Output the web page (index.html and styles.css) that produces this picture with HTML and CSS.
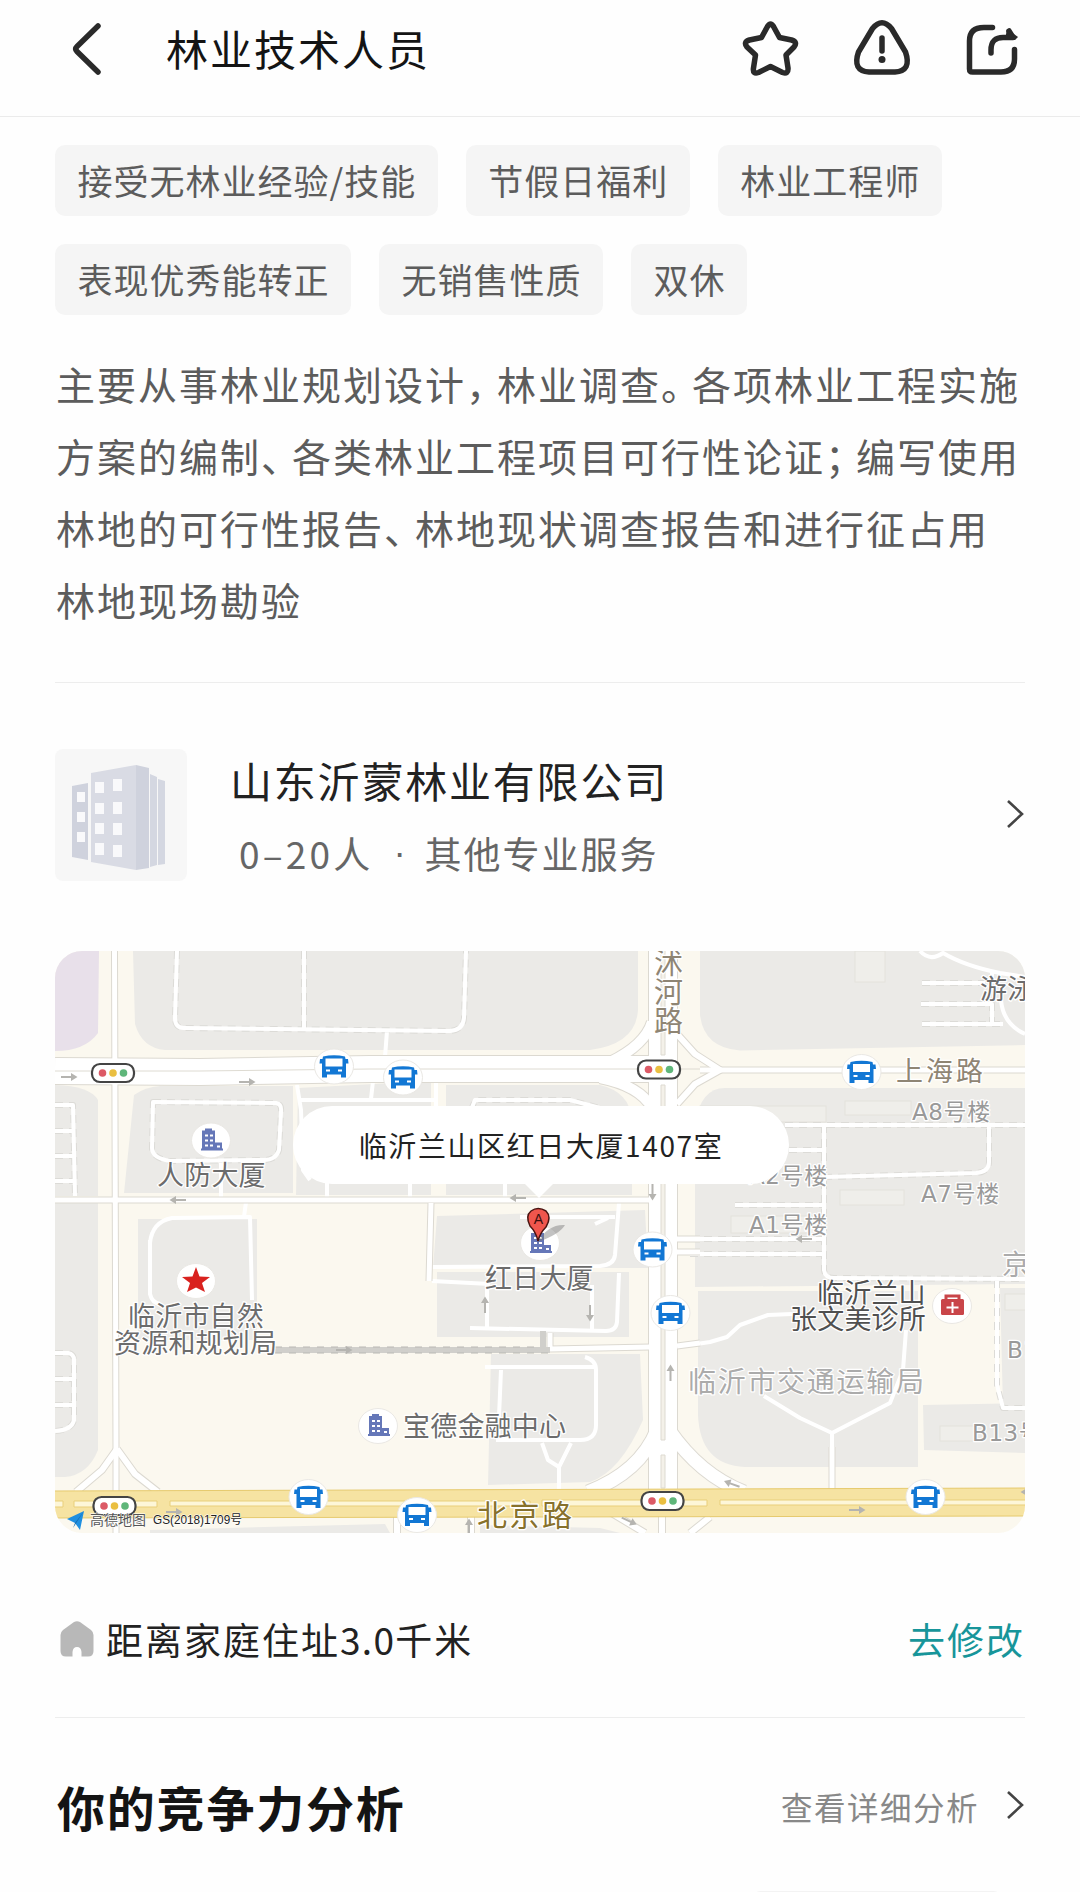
FILE: index.html
```html
<!doctype html>
<html lang="zh-CN">
  <head>
    <meta charset="utf-8" />
    <title>林业技术人员</title>
    <link rel="stylesheet" href="styles.css" />
  </head>

  <body>
    <header class="topbar">
      <svg class="back" viewBox="0 0 34 58">
        <path d="M28 6 L7 26.500 Q4.500 29 7 31.500 L28 52" />
      </svg>
      <h1>林业技术人员</h1>
      <div class="actions">
        <svg viewBox="0 0 60 60">
          <path d="M26.500 8.500 Q29.500 3.500 32.500 8.500 L38.500 19.500 L50.500 22 Q57 24 53 29 L45 37 L47 50 Q47.500 56.500 41.500 54.500 L29.500 48.500 L17.500 54.500 Q11.500 56.500 12.500 50 L14.500 37 L6 29 Q2 24 8.500 22 L20.500 19.500 Z" />
        </svg>
        <svg viewBox="0 0 60 60">
          <path d="M20.500 10.500 Q30 -1 39.500 10.500 L53.500 34 Q60 53 43 54 L17 54 Q0 53 6.500 34 Z" />
          <path d="M30 20 V33" />
          <circle class="dot" cx="30" cy="41.500" r="3.500" />
        </svg>
        <svg viewBox="0 0 60 60">
          <path d="M29.500 9.500 H21 Q6.500 9.500 6.500 23 V51 Q6.500 54 9.500 54 H38 Q51.500 54 51.500 41 V31.500" />
          <path d="M28 35 V32 Q28 19 41 19.500 H50 L46 13" />
          <path class="dot" d="M44 11 L55 19 L52 22 H42 Z" />
        </svg>
      </div>
    </header>

    <main>
      <ul class="tags">
        <li>接受无林业经验/技能</li>
        <li>节假日福利</li>
        <li>林业工程师</li>
        <li>表现优秀能转正</li>
        <li>无销售性质</li>
        <li>双休</li>
      </ul>

      <p class="description">
        主要从事林业规划设计<i>，</i>林业调查<i>。</i>各项林业工程实施<br />
        方案的编制<i>、</i>各类林业工程项目可行性论证<i>；</i>编写使用<br />
        林地的可行性报告<i>、</i>林地现状调查报告和进行征占用<br />
        林地现场勘验
      </p>

      <section class="company">
        <svg class="logo" viewBox="55 749 132 132">
          <path fill="#cfd2dd" d="M72 786 L88 783 V860 L72 857 Z M136 765 L149 768 V868 L136 870 Z" />
          <path fill="#d4d7e1" d="M150 774 L157 777 V865 L150 867 Z M158 779 L165 781 V864 L158 865 Z" />
          <path fill="#d9dbe4" d="M91 773 L136 765 V870 L91 862 Z" />
          <path fill="#f9f9fb" d="M77 792h8v10h-8z M77 812h8v10h-8z M77 832h8v10h-8z M95 782h9v11h-9z M95 803h9v11h-9z M95 823h9v11h-9z M95 843h9v12h-9z M113 779h9v12h-9z M113 802h9v12h-9z M113 823h9v12h-9z M113 845h9v12h-9z" />
        </svg>
        <div class="company-info">
          <h2>山东沂蒙林业有限公司</h2>
          <p><span class="size">0–20人</span><span class="sep">·</span><span>其他专业服务</span></p>
        </div>
        <svg class="chevron" viewBox="0 0 18 30"><path d="M2 2 L16 15 L2 28" /></svg>
      </section>

      <section class="map">
        <svg class="map-canvas" viewBox="55 951 970 582">
          <defs>
            <g id="bus">
              <ellipse class="badge" rx="19.500" ry="17.500" />
              <path fill="#1277d4" d="M-11 -10 Q0 -12.500 11 -10 L11.500 -7.500 H14 L14.500 -3 H12 V11 H7 V8 H-7 V11 H-12 V-3 H-14.500 L-14 -7.500 H-11.500 Z" />
              <path fill="#fff" d="M-8.500 -8 H8.500 V0 H-8.500 Z M-8 3h4v2h-4z M4 3h4v2h-4z" />
            </g>
            <g id="light">
              <rect x="-21" y="-9" width="42" height="18" rx="8" fill="#fff" stroke="#444" stroke-width="2.200" />
              <circle cx="-10.500" r="3.800" fill="#dc5a66" />
              <circle r="3.800" fill="#eabf41" />
              <circle cx="10.500" r="3.800" fill="#5fb67a" />
            </g>
            <g id="office">
              <ellipse class="badge" rx="19.500" ry="17.500" />
              <path fill="#6577b8" d="M-9 -10 H-6 V-12 H1 V-10 H4 V2 H11 V8 H12 V10 H-10 V8 H-9 Z" />
              <path fill="#fff" d="M-6 -6h3v2h-3z M-1 -6h3v2h-3z M-6 -1h3v2h-3z M-1 -1h3v2h-3z M-6 4h3v2h-3z M-1 4h3v2h-3z M6 5h3v2h-3z" />
            </g>
            <path id="arrow" d="M-8 -1 H2 V-4 L8.500 0 L2 4 V1 H-8 Z" fill="#b5b4b0" />
          </defs>

          <rect x="55" y="951" width="970" height="582" fill="#fbf8ef" />

          <!-- blocks -->
          <path fill="#e8e0ea" d="M55 951 H99 L98 1033 Q85 1051 55 1051 Z" />
          <g fill="#ebeae7">
            <path d="M133 951 L135 1024 Q142 1048 165 1050 H590 Q636 1044 638 1010 V951 Z" />
            <path d="M700 951 V1015 Q704 1048 740 1050.500 L1025 1045 V951 Z" />
            <path d="M55 1085 Q90 1086 98 1100 V1196 H55 Z" />
            <path d="M55 1203 H98 V1450 Q88 1475 65 1477 H55 Z" />
            <path d="M134 1095 Q145 1087 160 1086 H293 V1193 H124 Z" />
            <path d="M298 1088 L431 1081 V1195 H296 Z" />
            <path d="M446 1085 H600 Q630 1092 632 1120 V1195 H446 Z" />
            <path d="M138 1219 H257 V1340 H138 Z" />
            <path d="M437 1216 L645 1210 L648 1268 H433 Z" />
            <path d="M437 1272 H629 V1337 H437 Z" />
            <path d="M491 1354 H640 L643 1420 Q620 1472 590 1482 L488 1485 Z" />
            <path d="M695 1125 Q700 1088 725 1088 H1025 V1284 L695 1287 Z" />
            <path d="M698 1291 H918 V1467 H745 Q700 1465 698 1415 Z" />
            <path d="M1000 1288 H1025 V1408 H1003 Z" />
            <path d="M923 1405 L1025 1403 V1453 L924 1450 Z" />
            <path d="M150 1530 L385 1524 L390 1533 H150 Z M480 1525 L600 1528 L620 1533 H480 Z" />
          </g>
          <g fill="#efeeea" stroke="#e4e2dc">
            <rect x="855" y="951" width="30" height="31" />
            <rect x="845" y="1101" width="66" height="14" />
            <rect x="700" y="1106" width="126" height="16" />
            <rect x="840" y="1190" width="64" height="15" />
            <rect x="731" y="1216" width="90" height="17" />
            <rect x="940" y="1426" width="34" height="15" />
            <rect x="1005" y="1294" width="24" height="16" />
          </g>

          <!-- footpaths -->
          <g class="path-edge">
            <path d="M177 951 L175 1018 Q175 1028 184 1028 L450 1031 Q463 1030 464 1018 L466 951 M304 951 V1029" />
            <path d="M922 983 H985 M921 1004 H992 V1024 M922 1024 H1003" />
            <path d="M55 1105 H73 L75 1196 M55 1131 H73 M55 1156 H73 M55 1181 H74" />
            <path d="M153 1102 L276 1103 Q282 1104 281 1112 L279 1150 Q276 1160 264 1160 L170 1161 Q152 1158 152 1148 Z" />
            <path d="M55 1353 H68 Q74 1354 74 1360 V1420 Q72 1430 55 1431 M55 1379 H73 M55 1405 H73" />
            <path d="M785 1125 H1025 M789 1150 H824 M824 1125 V1270 Q825 1278 834 1278 L1025 1279 M824 1177 L976 1173 Q989 1172 989 1162 V1125 M735 1205 H824 M690 1239 H824 M690 1254 H824 M997 1280 V1385 L1003 1408 H1025" />
            <path d="M471 1110 L475 1100 H570 L600 1108" />
          </g>
          <g class="path">
            <path d="M177 951 L175 1018 Q175 1028 184 1028 L450 1031 Q463 1030 464 1018 L466 951 M304 951 V1029 M387 1031 L385 1057" />
            <path d="M920 951 Q930 962 943 953 Q965 966 1000 973 L1025 977 M992 972 V980 M922 983 H985 M921 1004 H992 V1024 M922 1024 H1003 M1001 1000 Q1003 1024 1025 1034" />
            <path d="M55 1105 H73 L75 1196 M55 1131 H73 M55 1156 H73 M55 1181 H74" />
            <path d="M153 1102 L276 1103 Q282 1104 281 1112 L279 1150 Q276 1160 264 1160 L170 1161 Q152 1158 152 1148 Z" />
            <path d="M297 1085 L301 1110 L303 1170 L310 1180 M301 1100 H436 M373 1081 L371 1099 M436 1080 V1120 M471 1110 L475 1100 H570 L600 1108" />
            <path d="M221 1163 V1198 M327 1180 V1198 M410 1180 V1198 M505 1180 V1198" />
            <path d="M55 1353 H68 Q74 1354 74 1360 V1420 Q72 1430 55 1431 M55 1379 H73 M55 1405 H73" />
            <path d="M246 1202 L244 1217 M150 1243 Q152 1222 172 1218 L250 1217 L252 1300 M150 1240 V1294 Q152 1303 160 1304" />
            <path d="M431 1267 L600 1266 Q614 1265 615 1255 L619 1203 M432 1281 L490 1284 M520 1217 H615 M595 1224 L608 1218" />
            <path d="M619 1273 L617 1322 Q616 1331 606 1331 L470 1328 M487 1285 V1329 M592 1285 V1329" />
            <path d="M485 1367 H595 M585 1357 Q596 1360 596 1370 V1425 Q596 1440 580 1440 H496 M501 1370 L498 1440 M542 1443 L548 1460 L559 1467 L571 1443 M559 1467 V1490" />
            <path d="M785 1125 H1025 M789 1150 H824 M824 1125 V1270 Q825 1278 834 1278 L1025 1279 M824 1177 L976 1173 Q989 1172 989 1162 V1125 M735 1205 H824 M690 1239 H824 M690 1254 H824 M997 1280 V1385 L1003 1408 H1025" />
            <path d="M690 1345 L710 1342 L727 1337 L740 1325 L768 1315 L792 1314 M764 1396 L800 1418 L832 1433 L890 1403 L903 1370 L906 1330 M832 1433 V1460" />
          </g>

          <!-- roads: edge first, then surface -->
          <g class="edge">
            <path stroke-width="7" d="M114.500 951 L116 1450 V1533 M55 1200 H650 M431 1203 L429 1281 M550 1349 L650 1347 M550 1333 V1349 M677 1346 L700 1343 M677 1239 H700 M677 1252 H700 M832 1447 V1490 M700 1070 H1025" />
            <path stroke-width="8" d="M117 1449 L102 1470 L76 1492 M117 1449 L135 1474 L158 1492 M677 1034 L695 1054 L720 1070 L695 1084 L677 1104 M397 1515 V1533 M471 1515 V1533 M662 1515 V1533 M610 1512 L645 1533 M710 1517 L690 1533" />
            <path stroke-width="12" d="M652 1022 Q645 1045 610 1062 M600 1078 Q640 1086 652 1108" />
            <path stroke-width="15" d="M657 1430 Q640 1472 588 1492 M669 1430 Q700 1475 744 1492" />
            <path stroke-width="28" d="M55 1071 L200 1072 L370 1069 H660" />
            <path stroke-width="30" d="M663 951 V1500" />
          </g>
          <g class="surface">
            <path stroke-width="5" d="M114.500 951 L116 1450 V1533 M55 1200 H650 M431 1203 L429 1281 M550 1349 L650 1347 M550 1333 V1349 M677 1346 L700 1343 M677 1239 H700 M677 1252 H700 M832 1447 V1490 M700 1070 H1025" />
            <path stroke-width="6" d="M117 1449 L102 1470 L76 1492 M117 1449 L135 1474 L158 1492 M677 1034 L695 1054 L720 1070 L695 1084 L677 1104 M397 1515 V1533 M471 1515 V1533 M662 1515 V1533 M610 1512 L645 1533 M710 1517 L690 1533" />
            <path stroke-width="10" d="M652 1022 Q645 1045 610 1062 M600 1078 Q640 1086 652 1108" />
            <path stroke-width="13" d="M657 1430 Q640 1472 588 1492 M669 1430 Q700 1475 744 1492" />
            <path stroke-width="26" d="M55 1071 L200 1072 L370 1069 H660" />
            <path stroke-width="28" d="M663 951 V1500" />
          </g>
          <path fill="none" stroke="#dedbd2" d="M55 1071 H200 L370 1069 H645 M675 1069 H700" />
          <path fill="#f4f1e9" stroke="#dddad1" d="M661 951 H665 V1055 H661 Z M661 1085 H665 V1440 H661 Z M661 1455 H665 V1488 H661 Z" />
          <path fill="none" stroke="#d0cfcb" stroke-width="6" d="M275 1350 H550 M543 1331 V1350" />
          <path fill="none" stroke="#b9b8b4" stroke-width="1" stroke-dasharray="7 7" d="M275 1353 H550 M275 1347 H540" />

          <path fill="#f6e3a2" stroke="#e6ca6e" d="M50 1491 L1030 1488 V1516 L50 1518 Z" />
          <path fill="#fdf6d8" stroke="#e9cf7a" d="M50 1501 H63 V1507 H50 Z M74 1501 H157 V1507 H74 Z M170 1501 H530 V1506 H170 Z M542 1500 H707 V1506 H542 Z M720 1500 H1030 V1505 H720 Z" />

          <!-- direction marks -->
          <use href="#arrow" x="69" y="1077" />
          <use href="#arrow" x="247" y="1082" />
          <use href="#arrow" x="344" y="1350" />
          <use href="#arrow" x="174" y="1512" />
          <use href="#arrow" x="857" y="1510" />
          <use href="#arrow" transform="translate(178 1200) rotate(180)" />
          <use href="#arrow" transform="translate(518 1198) rotate(180)" />
          <use href="#arrow" transform="translate(804 1239) rotate(180)" />
          <use href="#arrow" transform="translate(732 1484) rotate(200)" />
          <use href="#arrow" transform="translate(1029 1492) rotate(180)" />
          <use href="#arrow" transform="translate(629 1521) rotate(25)" />
          <use href="#arrow" transform="translate(652.500 1192) rotate(90)" />
          <use href="#arrow" transform="translate(590 1313) rotate(90)" />
          <use href="#arrow" transform="translate(485 1305) rotate(-90)" />
          <use href="#arrow" transform="translate(670.500 1373) rotate(-90)" />
          <use href="#arrow" transform="translate(469 1527) rotate(-90)" />

          <use href="#bus" x="334" y="1066.500" />
          <use href="#bus" x="403" y="1077.500" />
          <use href="#bus" x="861.500" y="1072" />
          <use href="#bus" x="652.500" y="1249.500" />
          <use href="#bus" x="670.500" y="1313" />
          <use href="#bus" x="308.500" y="1497" />
          <use href="#bus" x="417" y="1515" />
          <use href="#bus" x="925.500" y="1497" />
          <use href="#light" x="113" y="1073" />
          <use href="#light" x="659" y="1069.500" />
          <use href="#light" x="114.500" y="1506" />
          <use href="#light" x="662.500" y="1501" />
          <use href="#office" x="211" y="1140.500" />
          <use href="#office" x="540" y="1243" />
          <use href="#office" x="378" y="1426" />

          <ellipse class="badge" cx="196" cy="1281" rx="19.500" ry="17.500" />
          <path fill="#d9221f" d="M196 1267 L199.500 1276.500 L210 1277 L202 1283 L205 1292 L196 1287.500 L187 1292 L190 1283 L182 1277 L192.500 1276.500 Z" />
          <ellipse class="badge" cx="952" cy="1306" rx="19.500" ry="17.500" />
          <path fill="none" stroke="#c94549" stroke-width="3" d="M946 1301 V1296 H959 V1301" />
          <rect x="941" y="1299" width="23" height="16" rx="1.500" fill="#c94549" />
          <path stroke="#fff" stroke-width="2" d="M952.500 1302 V1313 M946.500 1307.500 H958.500" />

          <g class="road-name">
            <text x="668.500" y="948.500" class="vertical">沭河路</text>
            <text x="896" y="1081" class="wide">上海路</text>
          </g>
          <text x="477" y="1526" class="main-road">北京路</text>
          <g class="place">
            <text x="157" y="1185">人防大厦</text>
            <text x="128" y="1325.500">临沂市自然</text>
            <text x="114" y="1352.500">资源和规划局</text>
            <text x="485" y="1288">红日大厦</text>
            <text x="403" y="1436">宝德金融中心</text>
            <text x="980" y="999">游泳馆</text>
          </g>
          <g class="place dark">
            <text x="817" y="1303">临沂兰山</text>
            <text x="790" y="1329">张文美诊所</text>
          </g>
          <g class="unit">
            <text x="912" y="1120">A8号楼</text>
            <text x="749" y="1184">A2号楼</text>
            <text x="749" y="1233">A1号楼</text>
            <text x="921" y="1202">A7号楼</text>
            <text x="1007" y="1358">B12</text>
            <text x="972" y="1441">B13号</text>
          </g>
          <text x="1002" y="1275" class="area">京东</text>
          <text x="688" y="1392" class="area">临沂市交通运输局</text>

          <!-- marker -->
          <path fill="#777" opacity=".45" d="M538 1242 Q548 1224 565 1225 Q560 1234 538 1242 Z" />
          <path fill="#f0564d" stroke="#4a1512" stroke-width="1.500" d="M538 1241 Q536 1232 530 1226 Q525 1216 531 1211 Q538 1206 546 1211 Q552 1217 546 1227 Q540 1233 538 1241 Z" />
          <text x="538.500" y="1224" class="marker-text">A</text>

          <path fill="#1f8fe0" d="M67 1519 L84 1511 L80 1530 L75 1523 Z" />
          <path fill="#176cb0" d="M75 1523 L84 1511 L73 1528 Z" />
          <text x="90" y="1524.500" class="copyright amap">高德地图</text>
          <text x="153" y="1524" class="copyright" textLength="89" lengthAdjust="spacingAndGlyphs">GS(2018)1709号</text>
        </svg>
        <div class="bubble">临沂兰山区红日大厦1407室</div>
      </section>

      <section class="distance">
        <svg class="home" viewBox="0 0 34 36">
          <path d="M14 1 Q17 -0.500 20 1 L31 9 Q33.500 11 33.500 14 V30 Q33.500 35.500 28 35.500 H21.500 V31 Q21 26 17 26 Q13 26 12.500 31 V35.500 H6 Q0.500 35.500 0.500 30 V14 Q0.500 11 3 9 Z" />
        </svg>
        <span>距离家庭住址<b>3.0</b>千米</span>
        <a class="edit">去修改</a>
      </section>

      <section class="analysis">
        <h3>你的竞争力分析</h3>
        <a>查看详细分析</a>
        <svg class="chevron" viewBox="0 0 18 30"><path d="M2 2 L16 15 L2 28" /></svg>
      </section>
      <div class="card"></div>
    </main>
  </body>
</html>
```

FILE: styles.css
```css
*,
*::before,
*::after {
  box-sizing: border-box;
  margin: 0;
  padding: 0;
}

body {
  height: 1892px;
  overflow: hidden;
  background-color: #fefefe;
  color: #222;
  font-family: "Noto Sans CJK SC", sans-serif;
}

h1,
h2 {
  font-weight: 400;
}

.topbar {
  display: flex;
  align-items: center;
  height: 117px;
  padding: 0 57px 18px 70px;
  border-bottom: 1px solid #ebebeb;
}

.back {
  width: 34px;
  height: 58px;
}

.back path,
.actions path {
  fill: none;
  stroke: #2a2a2a;
  stroke-width: 5.500;
  stroke-linecap: round;
  stroke-linejoin: round;
}

.topbar h1 {
  margin: -2px 0 0 62px;
  font-size: 42px;
  line-height: 60px;
  letter-spacing: 2px;
  color: #141414;
}

.actions {
  display: flex;
  gap: 51px;
  margin-left: auto;
}

.actions svg {
  width: 60px;
  height: 60px;
  margin-top: -2px;
}

.actions .dot {
  fill: #2a2a2a;
  stroke: none;
}

main {
  padding: 28px 55px 0;
}

.tags {
  display: flex;
  flex-wrap: wrap;
  gap: 28px;
  list-style: none;
}

.tags li {
  height: 71px;
  padding: 0 21.500px 0 22.500px;
  border-radius: 10px;
  background-color: #f5f5f5;
  color: #5c5c5c;
  font-size: 35px;
  line-height: 69px;
  letter-spacing: 1px;
}

.description {
  height: 368px;
  padding: 32px 0 0 1px;
  border-bottom: 1px solid #ededed;
  color: #5c5c5c;
  font-size: 39px;
  line-height: 72px;
  letter-spacing: 2px;
  white-space: nowrap;
}

.description i {
  font-style: normal;
  letter-spacing: -8px;
}

.company {
  display: flex;
  align-items: center;
  height: 132px;
  margin-top: 66px;
}

.logo {
  width: 132px;
  height: 132px;
  border-radius: 8px;
  background-color: #f7f7f7;
}

.company-info {
  margin: 2px 0 0 43px;
}

.company-info h2 {
  font-size: 42px;
  line-height: 62px;
  letter-spacing: 1.800px;
}

.company-info p {
  display: flex;
  gap: 20px;
  padding-left: 9px;
  margin-top: 12px;
  color: #666;
  font-size: 37px;
  line-height: 60px;
  letter-spacing: 2px;
}

.company-info .size {
  letter-spacing: 3.200px;
}

.company-info .sep {
  width: 11px;
  font-family: "Liberation Sans", sans-serif;
  letter-spacing: 0;
  text-align: center;
}

.chevron {
  width: 18px;
  height: 30px;
  margin: -2px 1px 0 auto;
}

.chevron path {
  fill: none;
  stroke: #444;
  stroke-width: 2.600;
}

.map {
  position: relative;
  height: 582px;
  margin-top: 70px;
  border-radius: 27px;
  overflow: hidden;
}

.map-canvas {
  display: block;
  width: 970px;
  height: 582px;
}

.badge {
  fill: #fff;
  stroke: #eae8e4;
}

.path,
.path-edge,
.edge,
.surface {
  fill: none;
  stroke-linejoin: round;
}

.path {
  stroke: #fff;
  stroke-width: 4;
}

.path-edge {
  stroke: #dcdbd7;
  stroke-width: 6;
  stroke-dasharray: 8 6;
}

.edge {
  stroke: #dcd9d1;
}

.surface {
  stroke: #fff;
}

.map-canvas text {
  paint-order: stroke;
  stroke: #fff;
  stroke-width: 2.500px;
  stroke-linejoin: round;
}

.place {
  fill: #6c6c6c;
  font-size: 27px;
  letter-spacing: 0.200px;
}

.dark {
  fill: #505050;
}

.road-name {
  fill: #8f8574;
  font-size: 29px;
}

.vertical {
  writing-mode: vertical-rl;
}

.wide {
  font-size: 27px;
  letter-spacing: 3px;
}

.main-road {
  fill: #87712c;
  font-size: 30px;
  letter-spacing: 2.500px;
}

.unit {
  fill: #999;
  font-family: "DejaVu Sans", "Noto Sans CJK SC", sans-serif;
  font-size: 23px;
  letter-spacing: 0.600px;
}

.area {
  fill: #ababab;
  font-size: 28px;
  letter-spacing: 1.700px;
}

.map-canvas .marker-text {
  fill: #3c0f0d;
  stroke: none;
  font-family: "Liberation Sans", sans-serif;
  font-size: 14px;
  text-anchor: middle;
}

.map-canvas .copyright {
  fill: #222;
  stroke-width: 1px;
  font-family: "Liberation Sans", "Noto Sans CJK SC", sans-serif;
  font-size: 12px;
}

.map-canvas .amap {
  fill: #555;
  font-size: 14px;
}

/* Address bubble lies over the map, its tip points at the marker */
.bubble {
  position: absolute;
  top: 155px;
  left: 238px;
  width: 496px;
  height: 78px;
  border-radius: 39px;
  background-color: #fff;
  font-size: 28px;
  line-height: 79px;
  letter-spacing: 1.600px;
  text-align: center;
}

.bubble::after {
  content: "";
  position: absolute;
  top: 77px;
  left: 231px;
  border: 15px solid transparent;
  border-top-color: #fff;
  border-bottom: 0;
}

.distance {
  display: flex;
  align-items: center;
  height: 185px;
  padding: 27px 0 0 5px;
  border-bottom: 1px solid #ededed;
  font-size: 37px;
  letter-spacing: 2px;
}

.distance b {
  font-weight: 400;
  letter-spacing: 1.300px;
}

.home {
  width: 34px;
  height: 36px;
  margin: 0 12px 0 0;
  fill: #b8b8b8;
}

.edit {
  margin-left: auto;
  color: #17959a;
}

.analysis {
  display: flex;
  align-items: center;
  height: 172px;
  padding: 4px 0 0 2px;
}

.analysis h3 {
  color: #141414;
  font-size: 48px;
  line-height: 70px;
  letter-spacing: 1.800px;
}

.analysis a {
  margin-left: auto;
  color: #888;
  font-size: 31.500px;
  letter-spacing: 1.500px;
}

.analysis .chevron {
  margin-left: 27px;
}

.card {
  width: 252px;
  height: 20px;
  margin: 1px 22px 0 auto;
  border-radius: 10px;
  background-color: #f3f3f3;
}
```
